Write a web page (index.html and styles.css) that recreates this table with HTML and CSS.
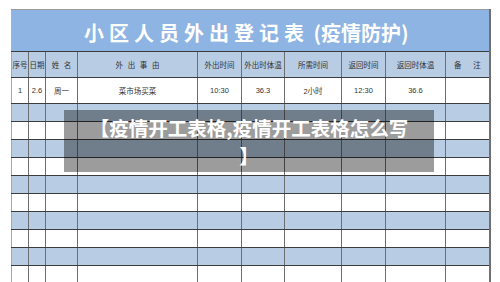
FILE: index.html
```html
<!DOCTYPE html>
<html lang="zh-CN">
<head>
<meta charset="utf-8">
<title>小区人员外出登记表</title>
<link rel="stylesheet" href="styles.css">
</head>
<body>
<div class="sheet">
  <table class="grid">
    <colgroup>
      <col class="c1"><col class="c2"><col class="c3"><col class="c4"><col class="c5">
      <col class="c6"><col class="c7"><col class="c8"><col class="c9"><col class="c10">
    </colgroup>
    <tr class="title-row">
      <td colspan="10" class="title"><span class="spaced">小区人员外出登记表</span> (疫情防护)</td>
    </tr>
    <tr class="head-row">
      <td>序号</td><td>日期</td><td class="ws3">姓 名</td><td class="ws3">外 出 事 由</td><td>外出时间</td>
      <td>外出时体温</td><td>所需时间</td><td>返回时间</td><td>返回时体温</td><td class="ws10">备 注</td>
    </tr>
    <tr class="data-row">
      <td>1</td><td>2.6</td><td>周一</td><td>菜市场买菜</td><td>10:30</td>
      <td>36.3</td><td>2小时</td><td>12:30</td><td>36.6</td><td></td>
    </tr>
    <tr class="row blue"><td></td><td></td><td></td><td></td><td></td><td></td><td></td><td></td><td></td><td></td></tr>
    <tr class="row"><td></td><td></td><td></td><td></td><td></td><td></td><td></td><td></td><td></td><td></td></tr>
    <tr class="row blue"><td></td><td></td><td></td><td></td><td></td><td></td><td></td><td></td><td></td><td></td></tr>
    <tr class="row"><td></td><td></td><td></td><td></td><td></td><td></td><td></td><td></td><td></td><td></td></tr>
    <tr class="row blue"><td></td><td></td><td></td><td></td><td></td><td></td><td></td><td></td><td></td><td></td></tr>
    <tr class="row"><td></td><td></td><td></td><td></td><td></td><td></td><td></td><td></td><td></td><td></td></tr>
    <tr class="row blue"><td></td><td></td><td></td><td></td><td></td><td></td><td></td><td></td><td></td><td></td></tr>
    <tr class="row"><td></td><td></td><td></td><td></td><td></td><td></td><td></td><td></td><td></td><td></td></tr>
    <tr class="row blue"><td></td><td></td><td></td><td></td><td></td><td></td><td></td><td></td><td></td><td></td></tr>
    <tr class="row"><td></td><td></td><td></td><td></td><td></td><td></td><td></td><td></td><td></td><td></td></tr>
  </table>
</div>
<div class="caption">【疫情开工表格,疫情开工表格怎么写<br>】</div>
</body>
</html>
```
FILE: styles.css
```css
html, body {
  margin: 0;
  padding: 0;
  background: #ffffff;
  overflow: hidden;
  height: 282px;
}

.sheet {
  padding: 9px 0 0 11px;
}

.grid {
  border-collapse: collapse;
  table-layout: fixed;
  width: 479px;
  font-family: "Liberation Sans", "Noto Sans CJK SC", sans-serif;
  font-size: 7.5px;
  color: #333333;
}

.c1 { width: 17px; }
.c2 { width: 17px; }
.c3 { width: 32px; }
.c4 { width: 120px; }
.c5 { width: 44px; }
.c6 { width: 43px; }
.c7 { width: 57px; }
.c8 { width: 44px; }
.c9 { width: 60px; }
.c10 { width: 44px; }

.grid td {
  padding: 0;
  text-align: center;
  vertical-align: middle;
  border-top: 1px solid #3c3c3c;
  border-bottom: 1px solid #3c3c3c;
  border-left: 1px solid #6e6e6e;
  border-right: 1px solid #6e6e6e;
  white-space: nowrap;
}

.grid td:first-child {
  border-left: 1px solid #a8a8a8;
}

.grid td:last-child {
  border-right: 2px solid #707070;
}

.title-row { height: 42px; }

.grid td.title {
  background: #8db4e2;
  border-top: 1px solid #9a9a9a;
  border-left: 1px solid #b0b0b0;
  color: #ffffff;
  font-family: "Noto Sans CJK SC", sans-serif;
  font-weight: 700;
  font-size: 20px;
  padding: 3px 8px 0 0;
}

.spaced { letter-spacing: 5px; }

.head-row { height: 26px; }
.head-row td {
  background: #b8cce4;
  font-family: "Noto Sans CJK SC", sans-serif;
  border-top: 1px solid #2e2e2e;
}

.ws3 { word-spacing: 3px; }
.ws10 { word-spacing: 10px; }

.data-row { height: 26px; }
.data-row td { background: #ffffff; }

.row { height: 18px; }
.row td { background: #ffffff; }
.row.blue td { background: #b8cce4; }

.caption {
  position: absolute;
  left: 64px;
  top: 110px;
  width: 370px;
  height: 62px;
  box-sizing: border-box;
  padding: 4px 0 2px;
  background: rgba(0, 0, 0, 0.39);
  color: #ffffff;
  font-family: "Noto Sans CJK SC", sans-serif;
  font-weight: 700;
  font-size: 19.5px;
  line-height: 28px;
  text-align: center;
  white-space: nowrap;
}
```
